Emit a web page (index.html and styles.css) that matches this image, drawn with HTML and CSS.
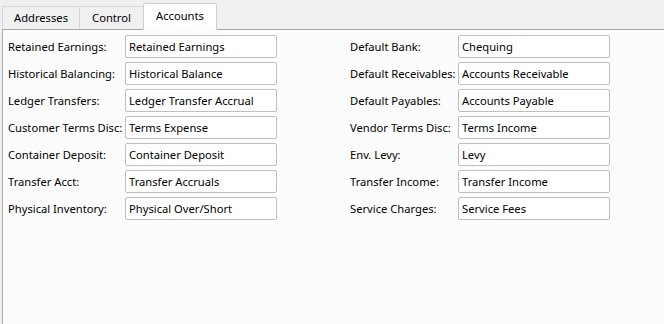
FILE: index.html
```html
<!DOCTYPE html>
<html>
<head>
<meta charset="utf-8">
<link rel="stylesheet" href="styles.css">
</head>
<body>
<div class="window">
  <div class="tabstrip">
    <div class="tab tab-addresses">Addresses</div>
    <div class="tab tab-control">Control</div>
    <div class="tab tab-accounts selected">Accounts</div>
  </div>
  <div class="pane">
    <div class="form">
      <div class="col col-left">
        <label class="lbl">Retained Earnings:</label><div class="field">Retained Earnings</div>
        <label class="lbl">Historical Balancing:</label><div class="field">Historical Balance</div>
        <label class="lbl">Ledger Transfers:</label><div class="field">Ledger Transfer Accrual</div>
        <label class="lbl">Customer Terms Disc:</label><div class="field">Terms Expense</div>
        <label class="lbl">Container Deposit:</label><div class="field">Container Deposit</div>
        <label class="lbl">Transfer Acct:</label><div class="field">Transfer Accruals</div>
        <label class="lbl">Physical Inventory:</label><div class="field">Physical Over/Short</div>
      </div>
      <div class="col col-right">
        <label class="lbl">Default Bank:</label><div class="field">Chequing</div>
        <label class="lbl">Default Receivables:</label><div class="field">Accounts Receivable</div>
        <label class="lbl">Default Payables:</label><div class="field">Accounts Payable</div>
        <label class="lbl">Vendor Terms Disc:</label><div class="field">Terms Income</div>
        <label class="lbl">Env. Levy:</label><div class="field">Levy</div>
        <label class="lbl">Transfer Income:</label><div class="field">Transfer Income</div>
        <label class="lbl">Service Charges:</label><div class="field">Service Fees</div>
      </div>
    </div>
  </div>
</div>
</body>
</html>
```

FILE: styles.css
```css
html, body {
  margin: 0;
  padding: 0;
  background: #f0f0f0;
}
body {
  font-family: "Noto Sans", "Open Sans", sans-serif;
  font-size: 11.2px;
  color: #000;
  width: 664px;
  height: 324px;
  overflow: hidden;
}
.window {
  display: flex;
  flex-direction: column;
  height: 324px;
}
.tabstrip {
  display: flex;
  align-items: flex-end;
  height: 29px;
  padding-left: 2px;
  position: relative;
  z-index: 1;
}
.tab {
  box-sizing: border-box;
  height: 23px;
  border: 1px solid #d9d9d9;
  border-bottom: none;
  background: #f0f0f0;
  display: flex;
  align-items: center;
  justify-content: center;
  color: #000;
  line-height: 1;
  padding-bottom: 1px;
}
.tab-addresses { width: 78px; }
.tab-control { width: 65px; margin-left: -1px; }
.tab-accounts { width: 74px; margin-left: -1px; }
.tab.selected {
  height: 27px;
  background: #ffffff;
  border-color: #d0d0d0;
  border-top-left-radius: 2px;
  border-top-right-radius: 2px;
  margin-bottom: -1px;
  padding-bottom: 2px;
}
.pane {
  flex: 1;
  margin-left: 2px;
  border-top: 1px solid #a7a7a7;
  border-left: 1px solid #a7a7a7;
  background: #fcfcfc;
  padding: 5px 0 0 5px;
}
.form {
  display: flex;
  gap: 73px;
}
.col {
  display: grid;
  grid-template-columns: 117px 152px;
  grid-auto-rows: 23px;
  row-gap: 4px;
}
.col-right {
  grid-template-columns: 108px 152px;
}
.lbl {
  display: flex;
  align-items: center;
  white-space: nowrap;
  padding-bottom: 1px;
}
.field {
  box-sizing: border-box;
  height: 23px;
  border: 1px solid #bfbfbf;
  border-radius: 2px;
  background: #ffffff;
  padding: 0 3px;
  display: flex;
  align-items: center;
  white-space: nowrap;
  overflow: hidden;
  padding-bottom: 1px;
}
```
